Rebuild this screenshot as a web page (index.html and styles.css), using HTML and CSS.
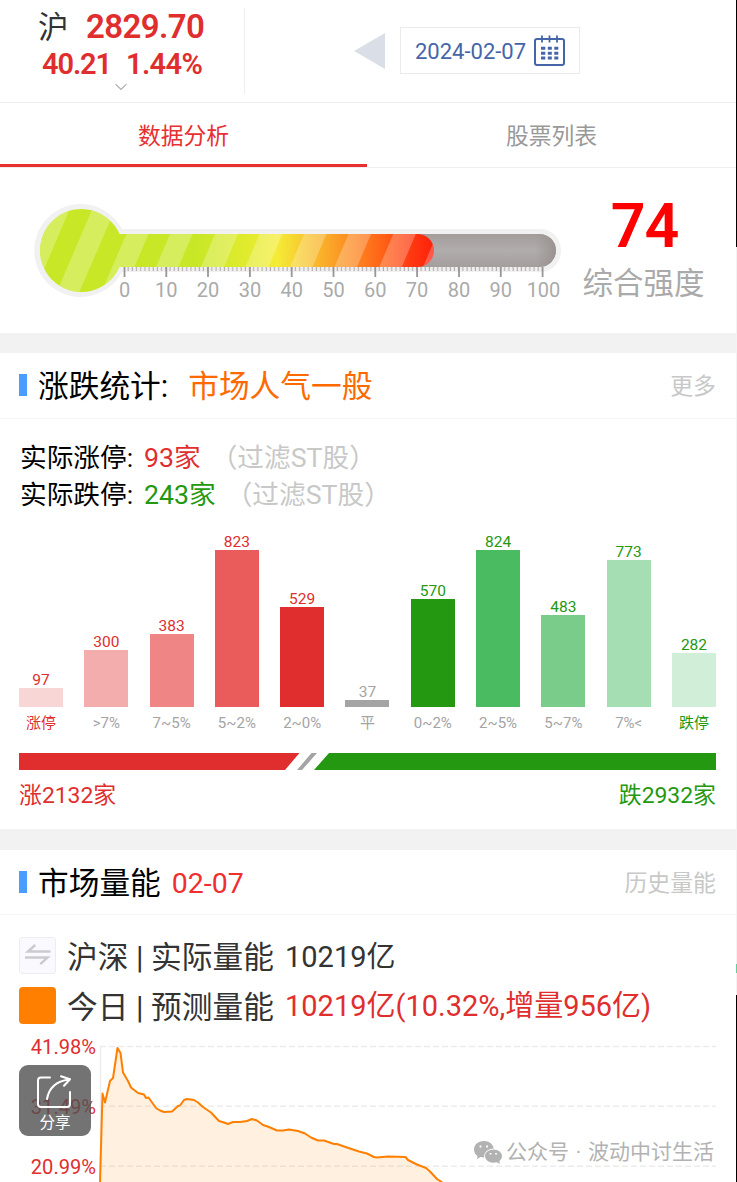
FILE: index.html
```html
<!DOCTYPE html>
<html lang="zh-CN">
<head>
<meta charset="utf-8">
<title>数据分析</title>
<link rel="stylesheet" href="styles.css">
</head>
<body>
<div class="app">
  <header class="top">
    <div class="index">
      <div class="index-main"><span class="market">沪</span><span class="price">2829.70</span></div>
      <div class="index-sub"><span class="diff">40.21</span><span class="pct">1.44%</span></div>
      <svg class="chevron" width="14" height="8" viewBox="0 0 14 8"><path d="M1.5 1.2 7 6.5l5.500-5.300" fill="none" stroke="#aaa" stroke-width="1.100"/></svg>
    </div>
    <svg class="prev" width="31" height="36" viewBox="0 0 31 36"><path d="M0 18 31 0V36z" fill="#dadfe7"/></svg>
    <div class="date"><span>2024-02-07</span>
      <svg width="31" height="31" viewBox="0 0 31 31" fill="none" stroke="#4565a8"><rect x="1" y="4" width="29" height="26" rx="2" stroke-width="2"/><path d="M8 .5v7M15.500.5v7M23 .5v7" stroke-width="1.800"/><path d="M7 13.200h4.300m2.500 0h4m2.500 0h4M7 18.200h4.300m2.500 0h4m2.500 0h4M7 23h4.300m2.500 0h4m2.500 0h4" stroke-width="3"/></svg>
    </div>
  </header>
  <nav class="tabs"><div class="tab active">数据分析</div><div class="tab">股票列表</div></nav>

  <section class="strength">
    <svg class="gauge" width="580" height="165" viewBox="0 168 580 165">
      <defs>
        <linearGradient id="heat" gradientUnits="userSpaceOnUse" x1="40" x2="434" y1="0" y2="0"><stop offset="0" stop-color="#c8e827"/><stop offset=".4" stop-color="#c8e827"/><stop offset=".53" stop-color="#e2eb2e"/><stop offset=".6" stop-color="#f4ec36"/><stop offset=".66" stop-color="#f7ce31"/><stop offset=".76" stop-color="#fb9925"/><stop offset=".86" stop-color="#ff6718"/><stop offset=".94" stop-color="#ff3a10"/><stop offset="1" stop-color="#ff200b"/></linearGradient>
        <linearGradient id="tube" x1="0" x2="0" y1="0" y2="1"><stop offset="0" stop-color="#a39d9c"/><stop offset=".5" stop-color="#b1adac"/><stop offset="1" stop-color="#a49e9d"/></linearGradient>
        <linearGradient id="cap"><stop offset="0" stop-color="#999291" stop-opacity="0"/><stop offset="1" stop-color="#999291"/></linearGradient>
        <clipPath id="fluid"><path d="M119.500 234H417.500a16.500 16.500 0 0 1 0 33H119.500A41.500 41.500 0 1 1 119.500 234z"/></clipPath>
        <pattern id="ticks" width="4.184" height="5" patternUnits="userSpaceOnUse" x="122" y="267"><path d="M2 0v4" stroke="#b4acac" stroke-width="1.200"/></pattern>
      </defs>
      <path d="M122 229H541a20 21.500 0 0 1 0 43H122A46.500 46.500 0 1 1 122 229z" fill="#f1f1f1"/>
      <path d="M400 234H539.500a16.500 16.500 0 0 1 0 33H400z" fill="url(#tube)"/>
      <path d="M535 234h4.500a16.500 16.500 0 0 1 0 33H535z" fill="url(#cap)"/>
      <g clip-path="url(#fluid)"><path d="M38 205H440V295H38z" fill="url(#heat)"/><path class="stripes" d="M30 205H71.500L33 295H30zM94 205H117L78 295H55.500zM126.500 234h22l-14 33-12 28H100zM170 234h22.500l-14 33h-22.500zM215 234h23l-14 33h-23zM259.500 234h23l-14 33h-23zM304 234h22.500l-14 33h-22.500zM348.500 234h22.500l-14 33h-22.500zM393.300 234h22.500l-14 33h-22.500zM437 234h22.500l-14 33h-22.500z"/></g>
      <path d="M124 267h420v5H124z" fill="url(#ticks)"/>
      <path d="M124.500 267v10M166.300 267v10M208 267v10M249.900 267v10M291.700 267v10M333.500 267v10M375.300 267v10M417.100 267v10M459 267v10M500.800 267v10M542.600 267v10" stroke="#9d9595" stroke-width="1.800"/>
      <g class="scale"><text x="124.500" y="296.500">0</text><text x="166.300" y="296.500">10</text><text x="208" y="296.500">20</text><text x="249.900" y="296.500">30</text><text x="291.700" y="296.500">40</text><text x="333.500" y="296.500">50</text><text x="375.300" y="296.500">60</text><text x="417.100" y="296.500">70</text><text x="459" y="296.500">80</text><text x="500.800" y="296.500">90</text><text x="543.500" y="296.500">100</text></g>
    </svg>
    <div class="score"><div class="score-num">74</div><div class="score-name">综合强度</div></div>
  </section>

  <section class="stats">
    <div class="head"><i class="mark"></i><h2>涨跌统计:</h2><span class="mood">市场人气一般</span><span class="more">更多</span></div>
    <div class="limits">
      <p><span>实际涨停:</span><b class="up">93家</b><em>（过滤ST股）</em></p>
      <p><span>实际跌停:</span><b class="down">243家</b><em>（过滤ST股）</em></p>
    </div>
    <div class="bars">
      <div class="col red"><span>97</span><i style="height:19px;background:#f9d6d6"></i></div>
      <div class="col red"><span>300</span><i style="height:57px;background:#f4adad"></i></div>
      <div class="col red"><span>383</span><i style="height:73px;background:#f08585"></i></div>
      <div class="col red"><span>823</span><i style="height:157px;background:#ea5c5c"></i></div>
      <div class="col red"><span>529</span><i style="height:100.500px;background:#e02e2e"></i></div>
      <div class="col"><span>37</span><i style="height:7.500px;background:#a4a4a4"></i></div>
      <div class="col green"><span>570</span><i style="height:108.500px;background:#249810"></i></div>
      <div class="col green"><span>824</span><i style="height:157px;background:#4bbb62"></i></div>
      <div class="col green"><span>483</span><i style="height:92px;background:#79cc89"></i></div>
      <div class="col green"><span>773</span><i style="height:147px;background:#a4deb2"></i></div>
      <div class="col green"><span>282</span><i style="height:54px;background:#d1eed8"></i></div>
    </div>
    <div class="ranges"><span class="up">涨停</span><span>&gt;7%</span><span>7~5%</span><span>5~2%</span><span>2~0%</span><span>平</span><span>0~2%</span><span>2~5%</span><span>5~7%</span><span>7%&lt;</span><span class="down">跌停</span></div>
    <svg class="ratio" width="697" height="17" viewBox="0 0 697 17"><path d="M0 0H280.500L266 17H0z" fill="#e02e2e"/><path d="M292.500 0h5.500l-15 17h-5z" fill="#a4a4a4"/><path d="M310 0H697V17H295z" fill="#249810"/></svg>
    <div class="totals"><span class="up">涨2132家</span><span class="down">跌2932家</span></div>
  </section>

  <section class="volume">
    <div class="head"><i class="mark"></i><h2>市场量能</h2><span class="day">02-07</span><span class="more">历史量能</span></div>
    <div class="legend">
      <div class="row"><svg class="swatch" width="37" height="37" viewBox="0 0 37 37"><rect x=".5" y=".5" width="36" height="36" rx="2.500" fill="#f9f9ff" stroke="#ececf2"/><path d="M31.500 14.600H9l7.200-6.600M6 20.600H28.500L21.300 27.200" fill="none" stroke="#cbcbcf" stroke-width="2.500"/></svg><span class="name">沪深 | 实际量能</span><span class="amount">10219亿</span></div>
      <div class="row"><i class="swatch orange"></i><span class="name">今日 | 预测量能</span><span class="amount up">10219亿(10.32%,增量956亿)</span></div>
    </div>
    <svg class="trend" width="737" height="145" viewBox="0 1037 737 145">
      <path d="M100.500 1046V1182" stroke="#ececec" stroke-width="1.500"/>
      <path d="M100 1046.500H716M100 1106.300H716M100 1166.300H716" stroke="#ececec" stroke-width="1.500" stroke-dasharray="6 3"/>
      <g class="axis"><text x="96" y="1054.300">41.98%</text><text x="96" y="1114.300">31.49%</text><text x="96" y="1174.300">20.99%</text></g>
      <path class="line" d="M100 1182 102.500 1093.500 105 1102.500 110 1081 113 1078 117.500 1048 120.500 1053 123 1072.500 128 1081 131 1087.500 138 1093 144 1094.500 146 1098 148.500 1097.500 156 1108 160 1110.500 164 1112 172 1111.500 178 1106 180 1105.500 184 1100 187 1099 194 1100 198 1102.500 203 1107 211 1112.500 219 1121 224 1122.500 228 1124 233 1122 240 1122 247 1121 252 1119 257 1120.500 263 1125 269 1127 277 1130.500 283 1130.500 289 1129.500 298 1131 305 1133.500 311 1137.500 318 1140.500 324 1140.500 334 1144 337 1144 347 1147.500 359 1151.500 367 1153.500 374 1157 377 1157.500 388 1156.500 405.500 1157 408 1160 417 1164.500 426 1168 430 1171.500 437 1179 443 1183" />
    </svg>
  </section>

  <div class="share"><svg width="40" height="38" viewBox="0 0 40 38" fill="none" stroke="#fff" stroke-width="2" stroke-linecap="round" stroke-linejoin="round"><path d="M15 3.500H6q-3 0-3 3V30q0 3 3 3H32q3 0 3-3V18M12 25Q15 8 34 5.500M26 2.200l9 3-6 6.500"/></svg><span>分享</span></div>
  <div class="account"><svg width="28" height="23" viewBox="0 0 28 23"><path d="M10 0C4 0 0 3.700 0 8.500c0 2.700 1.300 4.900 3.500 6.400L3 18l3.500-1.900L10 16.500C10 11 14 7.500 19.800 7.500 19 3 15 0 10 0z" fill="#b2b2b2"/><path d="M19.500 8.500C14.500 8.500 11 11.500 11 15s3.500 6.700 8.500 6.700l3-.5L26 22.700l-.6-2.700c1.600-1.200 2.600-3 2.600-5 0-3.500-3.500-6.500-8.500-6.500z" fill="#b2b2b2"/><path d="M6.500 4.500v2M13 4.500v2M16.500 12v1.500M22 12v1.500" stroke="#fff" stroke-width="1.800"/></svg><span>公众号 · 波动中讨生活</span></div>
  <i class="edge edge-top"></i><i class="edge edge-mid"></i><i class="edge edge-bottom"></i><i class="edge-dot"></i>
</div>
</body>
</html>
```

FILE: styles.css
```css
* { box-sizing: border-box; }
body { margin: 0; background: #fff; font-family: Roboto, "Noto Sans CJK SC", sans-serif; color: #000; }
h2, p { margin: 0; font-weight: 400; }
b { font-weight: 400; }
em, i { font-style: normal; }
svg { display: block; flex: none; }
.app { position: relative; width: 737px; height: 1182px; overflow: hidden; white-space: nowrap; }
.up { color: #e02e2e; }
.down { color: #249810; }

.top { display: flex; height: 103px; border-bottom: 1px solid #eee; }
.index { width: 245px; height: 86px; margin-top: 8px; border-right: 1px solid #eee; color: #e02e2e; font-weight: 600; }
.index-main { display: flex; height: 37px; padding-left: 38px; line-height: 37px; }
.market { width: 48px; line-height: 40px; font-size: 30.5px; font-weight: 400; color: #333; }
.price { font-size: 33px; letter-spacing: -.6px; }
.index-sub { display: flex; height: 38px; padding-left: 42px; line-height: 39px; font-size: 29px; }
.diff { width: 84px; letter-spacing: -1.100px; }
.pct { letter-spacing: -.600px; }
.chevron { margin: 0 0 0 114px; }
.prev { margin: 33px 15px 0 109px; }
.date { display: flex; align-items: center; gap: 8px; width: 180px; height: 47px; margin-top: 27px; padding-left: 14px; border: 1px solid #eaeaea; color: #4565a8; font-size: 22px; line-height: 28px; }
.date span { padding-top: 2px; }

.tabs { display: flex; height: 65px; border-bottom: 1px solid #eee; }
.tab { width: 369px; height: 64px; line-height: 68px; text-align: center; font-size: 22.800px; color: #999; }
.tab.active { width: 367px; color: #e83030; border-bottom: 3px solid #e83030; }

.strength { display: flex; height: 165px; }
.stripes { fill: #fff; fill-opacity: .25; }
.scale { font-size: 20px; fill: #aaa; text-anchor: middle; }
.score { width: 129px; text-align: center; }
.score-num { height: 62px; margin-top: 27px; line-height: 62px; font-size: 61px; font-weight: 600; letter-spacing: -1px; color: #f00; }
.score-name { height: 52px; margin-left: -2px; line-height: 54px; font-size: 30.5px; color: #aaa; }

.stats { height: 496px; border-top: 20px solid #f2f2f2; }
.head { display: flex; align-items: center; height: 66px; padding: 0 21px 0 19px; border-bottom: 1px solid #f5f5f5; line-height: 66px; }
.mark { width: 8px; height: 22px; margin: 0 11px 1px 0; background: #4a9dff; }
.head h2, .mood { padding-top: 2px; font-size: 30.7px; }
.mood { margin-left: 20px; color: #ff6a00; }
.more { margin-left: auto; padding-top: 2px; font-size: 22.900px; color: #c8c8c8; }
.limits { padding: 20px 0 0 20px; font-size: 26.700px; line-height: 39px; }
.limits p { display: flex; height: 37px; }
.limits span { width: 124px; }
.limits em { margin-left: 10px; color: #c8c8c8; }

.bars { display: flex; justify-content: space-between; align-items: flex-end; height: 194px; padding: 0 21px 0 19px; }
.col { display: flex; flex-direction: column; align-items: center; width: 44px; color: #a4a4a4; font-size: 15.500px; line-height: 16px; }
.col.red { color: #e02e2e; }
.col.green { color: #249810; }
.col i { width: 44px; }
.ranges { display: flex; justify-content: space-between; height: 46px; padding: 0 21px 0 19px; line-height: 33px; font-size: 15px; color: #a4a4a4; }
.ranges span { display: flex; justify-content: center; width: 44px; }
.ratio { margin-left: 19px; }
.totals { display: flex; justify-content: space-between; padding: 0 21px 0 19px; line-height: 52px; font-size: 22.900px; }

.volume { border-top: 21px solid #f2f2f2; }
.volume .head { height: 65px; }
.volume .mark { margin-bottom: 0; }
.volume .head h2 { padding-top: 4px; }
.day { margin-left: 11px; padding-top: 3px; font-size: 28.500px; color: #f03030; }
.volume .more { padding-top: 4px; }
.legend { height: 122px; padding: 16px 0 0 19px; }
.row { display: flex; align-items: center; height: 49.500px; line-height: 53px; color: #333; }
.swatch { width: 37px; height: 37px; margin-right: 11px; }
.orange { border-radius: 4px; background: #ff8000; }
.name { width: 218px; padding-top: 4px; font-size: 30.7px; }
.amount { padding-top: 3px; font-size: 29px; }
.amount.up { color: #e02e2e; }
.trend { overflow: visible; }
.axis { font-size: 20.100px; fill: #e02e2e; text-anchor: end; }
.line { fill: rgba(255, 128, 0, .12); stroke: #ff8000; stroke-width: 2; stroke-linejoin: round; }

.share { position: absolute; left: 19px; top: 1065px; display: flex; flex-direction: column; align-items: center; width: 72px; height: 71px; padding-top: 9px; border-radius: 9px; background: rgba(80, 80, 80, .8); color: #fff; font-size: 15.500px; line-height: 23px; }
.account { position: absolute; left: 474px; top: 1137px; display: flex; align-items: center; gap: 4px; height: 31px; color: #b2b2b2; font-size: 21px; line-height: 35px; word-spacing: 1.500px; }
.edge { position: absolute; right: 0; width: 1px; background: #000; }
.edge-top { top: 0; height: 247px; }
.edge-mid { top: 247px; height: 748px; background: #f3f3f3; }
.edge-bottom { top: 995px; bottom: 0; }
.edge-dot { position: absolute; right: 0; top: 964px; width: 1px; height: 9px; background: #5fd09a; }
```
